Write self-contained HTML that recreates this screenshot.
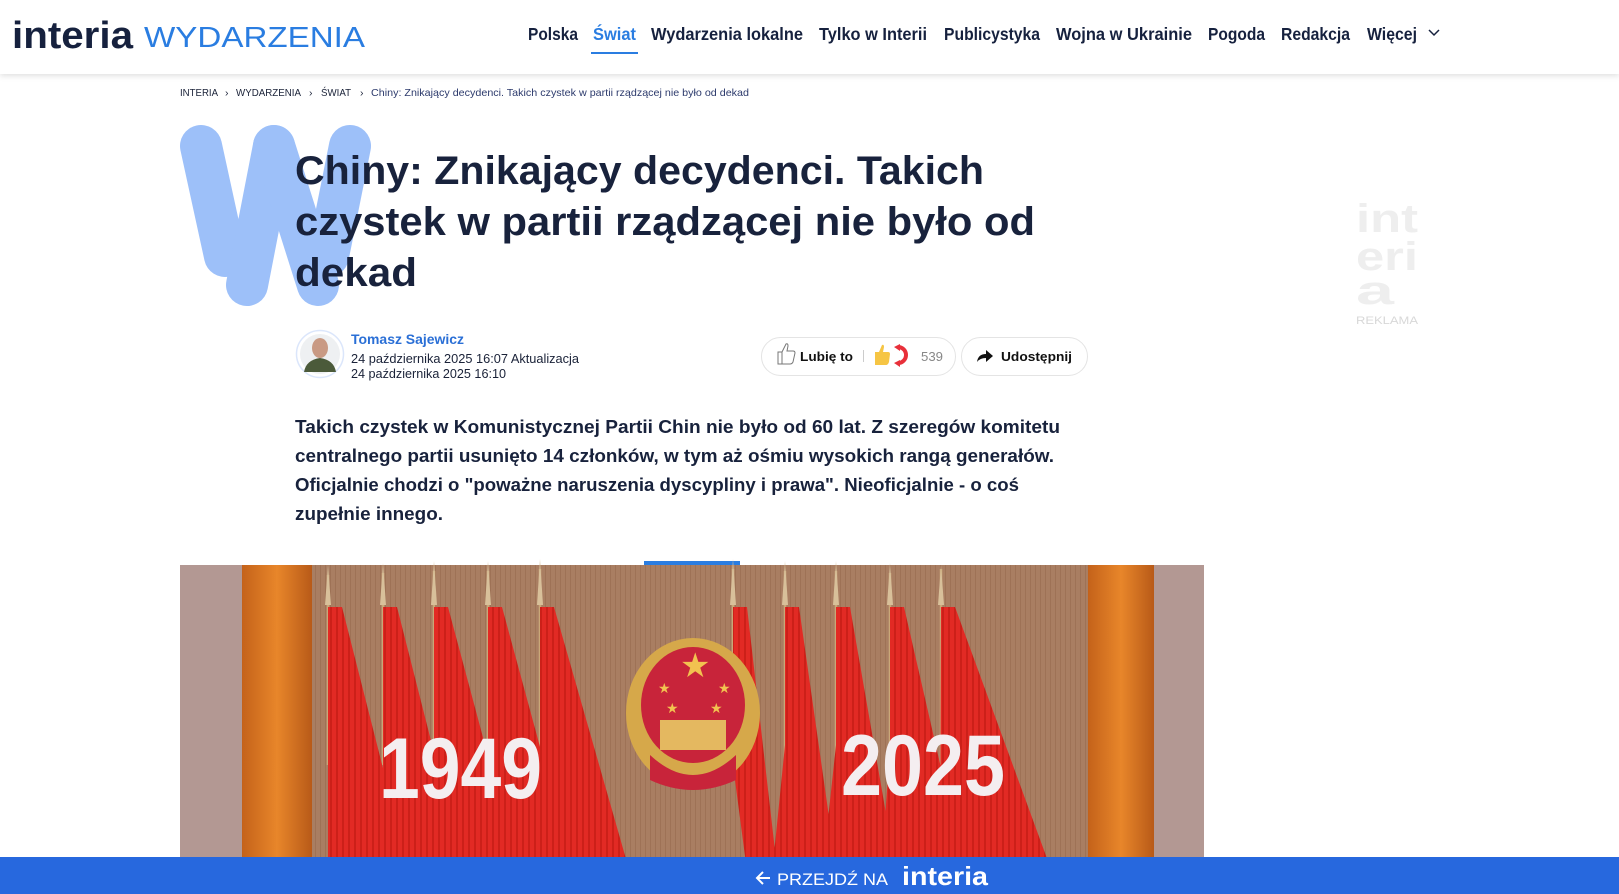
<!DOCTYPE html>
<html><head><meta charset="utf-8"><style>
html,body{margin:0;padding:0;background:#fff;width:1619px;height:894px;overflow:hidden}
svg{display:block}
text{font-family:"Liberation Sans",sans-serif}
</style></head><body>
<svg width="1619" height="894" viewBox="0 0 1619 894" xmlns="http://www.w3.org/2000/svg">
<defs>
<filter id="sh" x="-5%" y="-50%" width="110%" height="200%"><feDropShadow dx="0" dy="2" stdDeviation="3" flood-color="#000" flood-opacity="0.12"/></filter>
<linearGradient id="brown" x1="0" x2="1" y1="0" y2="0">
<stop offset="0" stop-color="#9a6a4c"/><stop offset="0.5" stop-color="#b58c6c"/><stop offset="1" stop-color="#9a6a4c"/></linearGradient>
<linearGradient id="orng" x1="0" x2="1"><stop offset="0" stop-color="#c4621a"/><stop offset="0.5" stop-color="#e8862a"/><stop offset="1" stop-color="#b85a18"/></linearGradient>
<pattern id="pleat" width="6" height="10" patternUnits="userSpaceOnUse"><rect width="6" height="10" fill="#e22a24"/><rect width="2" height="10" fill="#cc2019"/></pattern>
<pattern id="pleatB" width="5" height="10" patternUnits="userSpaceOnUse"><rect width="5" height="10" fill="#a97e62"/><rect width="1" height="10" fill="#8a5c40" opacity="0.35"/></pattern>
</defs>

<!-- header -->
<rect x="0" y="0" width="1619" height="74" fill="#fff" filter="url(#sh)"/>
<text x="12" y="48" font-size="38" font-weight="700" fill="#16213e" textLength="121" lengthAdjust="spacingAndGlyphs">interia</text>
<text x="144" y="47" font-size="29" fill="#2a7de1" textLength="221" lengthAdjust="spacingAndGlyphs">WYDARZENIA</text>
<g font-size="17.5" fill="#16213e" font-weight="600">
<text x="528" y="40" textLength="50" lengthAdjust="spacingAndGlyphs">Polska</text>
<text x="593" y="40" fill="#2a7de1" textLength="43" lengthAdjust="spacingAndGlyphs">Świat</text>
<text x="651" y="40" textLength="152" lengthAdjust="spacingAndGlyphs">Wydarzenia lokalne</text>
<text x="819" y="40" textLength="108" lengthAdjust="spacingAndGlyphs">Tylko w Interii</text>
<text x="944" y="40" textLength="96" lengthAdjust="spacingAndGlyphs">Publicystyka</text>
<text x="1056" y="40" textLength="136" lengthAdjust="spacingAndGlyphs">Wojna w Ukrainie</text>
<text x="1208" y="40" textLength="57" lengthAdjust="spacingAndGlyphs">Pogoda</text>
<text x="1281" y="40" textLength="69" lengthAdjust="spacingAndGlyphs">Redakcja</text>
<text x="1367" y="40" textLength="50" lengthAdjust="spacingAndGlyphs">Więcej</text>
</g>
<path d="M1429 30 L1434 35 L1439 30" fill="none" stroke="#16213e" stroke-width="1.5"/>
<rect x="591" y="52" width="47" height="2" fill="#2a7de1"/>

<!-- breadcrumb -->
<g font-size="10.5" fill="#1a2238">
<text x="180" y="96" textLength="38" lengthAdjust="spacingAndGlyphs">INTERIA</text>
<text x="225" y="96">›</text>
<text x="236" y="96" textLength="65" lengthAdjust="spacingAndGlyphs">WYDARZENIA</text>
<text x="309" y="96">›</text>
<text x="321" y="96" textLength="30" lengthAdjust="spacingAndGlyphs">ŚWIAT</text>
<text x="360" y="96">›</text>
<text x="371" y="96" fill="#2c3a6c" textLength="378" lengthAdjust="spacingAndGlyphs">Chiny: Znikający decydenci. Takich czystek w partii rządzącej nie było od dekad</text>
</g>

<!-- big W -->
<g stroke="#9dc0f9" stroke-width="42" stroke-linecap="round" fill="none">
<line x1="201" y1="146" x2="225" y2="256"/>
<line x1="274" y1="146" x2="247" y2="285"/>
<line x1="274" y1="146" x2="318" y2="285"/>
<line x1="350" y1="146" x2="328" y2="256"/>
</g>

<!-- title -->
<g font-size="40" font-weight="700" fill="#18223c">
<text x="295" y="184" textLength="689" lengthAdjust="spacingAndGlyphs">Chiny: Znikający decydenci. Takich</text>
<text x="295" y="235" textLength="740" lengthAdjust="spacingAndGlyphs">czystek w partii rządzącej nie było od</text>
<text x="295" y="286" textLength="122" lengthAdjust="spacingAndGlyphs">dekad</text>
</g>

<!-- right ad -->
<g fill="#eeeeee" font-weight="700" font-size="40">
<text x="1356" y="232" textLength="62" lengthAdjust="spacingAndGlyphs">int</text>
<text x="1356" y="270" textLength="62" lengthAdjust="spacingAndGlyphs">eri</text>
<text x="1356" y="304" textLength="38" lengthAdjust="spacingAndGlyphs">a</text>
</g>
<text x="1356" y="324" font-size="11" fill="#d8d8d8" textLength="62" lengthAdjust="spacingAndGlyphs">REKLAMA</text>

<!-- author -->
<circle cx="320" cy="354" r="23.5" fill="#fff" stroke="#dbe6fb" stroke-width="1.5"/>
<circle cx="320" cy="354" r="20" fill="#eef0f2"/>
<ellipse cx="320" cy="348" rx="8" ry="10" fill="#c99a84"/>
<path d="M304 372 Q306 360 320 358 Q334 360 336 372 Z" fill="#4b5a3a"/>
<text x="351" y="344" font-size="13.5" font-weight="600" fill="#2a6fd6" textLength="113" lengthAdjust="spacingAndGlyphs">Tomasz Sajewicz</text>
<text x="351" y="363" font-size="12.5" fill="#1a2238" textLength="228" lengthAdjust="spacingAndGlyphs">24 października 2025 16:07 Aktualizacja</text>
<text x="351" y="378" font-size="12.5" fill="#1a2238" textLength="155" lengthAdjust="spacingAndGlyphs">24 października 2025 16:10</text>

<!-- like button -->
<rect x="761.5" y="337.5" width="194" height="38" rx="19" fill="#fff" stroke="#e4e4e4"/>
<path d="M778 352 h4 v12 h-4 z M782 352 l4 -8 q2 -1 2 2 l-1 5 h6 q2 0 2 2 l-2 9 q-1 2 -3 2 h-8" fill="none" stroke="#777" stroke-width="1"/>
<text x="800" y="361" font-size="13" font-weight="700" fill="#111" textLength="53" lengthAdjust="spacingAndGlyphs">Lubię to</text>
<rect x="863" y="350" width="1" height="12" fill="#ccc"/>
<path d="M875 352 h4 v13 h-4 z M879 352 l3 -7 q2 -1 2 2 l-1 5 h5 q2 0 2 2 l-1 8 q-1 3 -3 3 h-7 z" fill="#f6c544"/>
<path d="M898 347 a8 8 0 1 1 0 16" fill="none" stroke="#e8303a" stroke-width="4"/>
<path d="M894 347 l6 -3 l0 7 z M894 363 l6 -3 l0 7z" fill="#e8303a"/>
<text x="921" y="361" font-size="13" fill="#888" textLength="22" lengthAdjust="spacingAndGlyphs">539</text>
<!-- share -->
<rect x="961.5" y="337.5" width="126" height="38" rx="19" fill="#fff" stroke="#e4e4e4"/>
<path d="M977 362 q1 -8 9 -8 v-4 l7 6 l-7 6 v-4 q-6 0 -9 4z" fill="#111"/>
<text x="1001" y="361" font-size="13" font-weight="700" fill="#111" textLength="71" lengthAdjust="spacingAndGlyphs">Udostępnij</text>

<!-- lead -->
<g font-size="18.5" font-weight="700" fill="#18223c">
<text x="295" y="433" textLength="765" lengthAdjust="spacingAndGlyphs">Takich czystek w Komunistycznej Partii Chin nie było od 60 lat. Z szeregów komitetu</text>
<text x="295" y="462" textLength="759" lengthAdjust="spacingAndGlyphs">centralnego partii usunięto 14 członków, w tym aż ośmiu wysokich rangą generałów.</text>
<text x="295" y="491" textLength="724" lengthAdjust="spacingAndGlyphs">Oficjalnie chodzi o "poważne naruszenia dyscypliny i prawa". Nieoficjalnie - o coś</text>
<text x="295" y="520" textLength="148" lengthAdjust="spacingAndGlyphs">zupełnie innego.</text>
</g>

<rect x="644" y="561" width="96" height="4" fill="#2a7de1"/>

<!-- image -->
<g transform="translate(180,565)">
<rect x="0" y="0" width="1024" height="329" fill="url(#pleatB)"/>
<rect x="0" y="0" width="62" height="329" fill="#b39893"/>
<rect x="62" y="0" width="70" height="329" fill="url(#orng)"/>
<rect x="908" y="0" width="66" height="329" fill="url(#orng)"/>
<rect x="974" y="0" width="50" height="329" fill="#b39893"/>
<!-- poles -->
<g stroke="#c9a878" stroke-width="2.5">
<line x1="148" y1="10" x2="148" y2="200"/><line x1="203" y1="8" x2="203" y2="200"/><line x1="254" y1="6" x2="254" y2="200"/><line x1="308" y1="6" x2="308" y2="200"/><line x1="360" y1="4" x2="360" y2="200"/>
<line x1="553" y1="4" x2="553" y2="200"/><line x1="605" y1="6" x2="605" y2="200"/><line x1="656" y1="6" x2="656" y2="200"/><line x1="710" y1="8" x2="710" y2="200"/><line x1="761" y1="4" x2="761" y2="200"/>
</g>
<g fill="#d8c09a">
<path d="M145 40 L148 0 L151 40Z"/><path d="M200 40 L203 -2 L206 40Z"/><path d="M251 40 L254 -4 L257 40Z"/><path d="M305 40 L308 -4 L311 40Z"/><path d="M357 40 L360 -6 L363 40Z"/>
<path d="M550 40 L553 -6 L556 40Z"/><path d="M602 40 L605 -4 L608 40Z"/><path d="M653 40 L656 -4 L659 40Z"/><path d="M707 40 L710 -2 L713 40Z"/><path d="M758 40 L761 0 L764 40Z"/>
</g>
<!-- flags left -->
<path d="M148 42 L162 42 L235 329 L148 329Z M203 42 L217 42 L290 329 L203 329Z M254 42 L268 42 L345 329 L254 329Z M308 42 L322 42 L400 329 L308 329Z M360 42 L374 42 L456 329 L360 329Z" fill="url(#pleat)"/>
<!-- flags right -->
<path d="M553 42 L567 42 L600 329 L570 329 L553 200Z M605 42 L619 42 L660 329 L590 329 L605 180Z M656 42 L670 42 L720 329 L640 329 L656 180Z M710 42 L724 42 L790 329 L700 329 L710 180Z M761 42 L775 42 L880 329 L760 329Z" fill="url(#pleat)"/>
<!-- emblem -->
<ellipse cx="513" cy="148" rx="67" ry="75" fill="#d6a84a"/>
<ellipse cx="513" cy="140" rx="52" ry="58" fill="#c8243a"/>
<rect x="480" y="155" width="66" height="30" fill="#e4b860"/>
<path d="M470 190 Q513 230 556 190 L556 215 Q513 235 470 215Z" fill="#c8243a"/>
<g fill="#f2c250">
<text x="500" y="112" font-size="34">★</text>
<text x="478" y="128" font-size="14">★</text><text x="538" y="128" font-size="14">★</text>
<text x="486" y="148" font-size="14">★</text><text x="530" y="148" font-size="14">★</text>
</g>
<!-- numbers -->
<g font-size="86" font-weight="700" fill="#f4eef0">
<text x="199" y="233" textLength="163" lengthAdjust="spacingAndGlyphs">1949</text>
<text x="661" y="230" textLength="164" lengthAdjust="spacingAndGlyphs">2025</text>
</g>
</g>

<!-- bottom bar -->
<rect x="0" y="857" width="1619" height="37" fill="#2768de"/>
<path d="M770 878 H757 M763 872 L757 878 L763 884" fill="none" stroke="#fff" stroke-width="2"/>
<text x="777" y="885" font-size="17" fill="#fff" textLength="111" lengthAdjust="spacingAndGlyphs">PRZEJDŹ NA</text>
<text x="902" y="885" font-size="26" font-weight="700" fill="#fff" textLength="86" lengthAdjust="spacingAndGlyphs">interia</text>
</svg>
</body></html>
